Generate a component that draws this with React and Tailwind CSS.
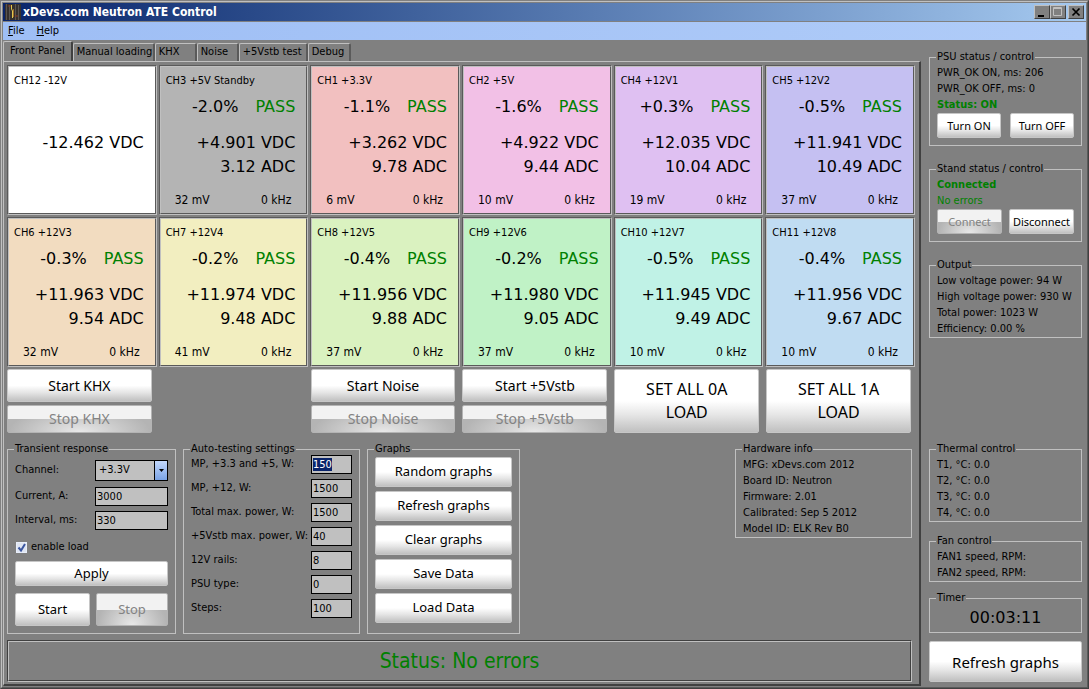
import React, { useEffect, useRef } from "react"

const channels = [
    { name: "CH12 -12V", bg: "bg-white", volts: "-12.462 VDC" },
    { name: "CH3 +5V Standby", bg: "bg-[#b4b4b4]", diff: "-2.0%", volts: "+4.901 VDC", amps: "3.12 ADC", ripple: "32 mV" },
    { name: "CH1 +3.3V", bg: "bg-[#f2c0c0]", diff: "-1.1%", volts: "+3.262 VDC", amps: "9.78 ADC", ripple: "6 mV" },
    { name: "CH2 +5V", bg: "bg-[#f2c0e6]", diff: "-1.6%", volts: "+4.922 VDC", amps: "9.44 ADC", ripple: "10 mV" },
    { name: "CH4 +12V1", bg: "bg-[#dfc0f2]", diff: "+0.3%", volts: "+12.035 VDC", amps: "10.04 ADC", ripple: "19 mV" },
    { name: "CH5 +12V2", bg: "bg-[#c5c0f2]", diff: "-0.5%", volts: "+11.941 VDC", amps: "10.49 ADC", ripple: "37 mV" },
    { name: "CH6 +12V3", bg: "bg-[#f2dcc0]", diff: "-0.3%", volts: "+11.963 VDC", amps: "9.54 ADC", ripple: "32 mV" },
    { name: "CH7 +12V4", bg: "bg-[#f2eec0]", diff: "-0.2%", volts: "+11.974 VDC", amps: "9.48 ADC", ripple: "41 mV" },
    { name: "CH8 +12V5", bg: "bg-[#daf2c0]", diff: "-0.4%", volts: "+11.956 VDC", amps: "9.88 ADC", ripple: "37 mV" },
    { name: "CH9 +12V6", bg: "bg-[#c0f2c6]", diff: "-0.2%", volts: "+11.980 VDC", amps: "9.05 ADC", ripple: "37 mV" },
    { name: "CH10 +12V7", bg: "bg-[#c0f2e6]", diff: "-0.5%", volts: "+11.945 VDC", amps: "9.49 ADC", ripple: "10 mV" },
    { name: "CH11 +12V8", bg: "bg-[#c0dcf2]", diff: "-0.4%", volts: "+11.956 VDC", amps: "9.67 ADC", ripple: "10 mV" },
];

const tabs = [
    { name: "Manual loading", width: "w-[82px]" },
    { name: "KHX", width: "w-[42px]" },
    { name: "Noise", width: "w-[42px]" },
    { name: "+5Vstb test", width: "w-[69px]" },
    { name: "Debug", width: "w-[43px]" },
];

const testSettings = [
    { label: "MP, +3.3 and +5, W:", value: "150" },
    { label: "MP, +12, W:", value: "1500" },
    { label: "Total max. power, W:", value: "1500" },
    { label: "+5Vstb max. power, W:", value: "40" },
    { label: "12V rails:", value: "8" },
    { label: "PSU type:", value: "0" },
    { label: "Steps:", value: "100" },
];

const graphActions = ["Random graphs", "Refresh graphs", "Clear graphs", "Save Data", "Load Data"];

function Channel({ channel }) {
    const { name, bg, diff, volts, amps, ripple } = channel;

    return (
        <section className="border border-[#c0c0c0] border-t-[#5a5a5a] border-l-[#5a5a5a]">
            <div className={`h-[148px] border border-[#5a5a5a] border-t-[#c0c0c0] border-l-[#c0c0c0] pt-[5px] ${bg}`}>
                <h2 className="pl-[5px] leading-[18px]">{name}</h2>
                <div className="pr-[11px] font-['DejaVu_Sans'] text-base leading-6 text-right">
                    <p className="flex h-[41px] items-start justify-end gap-[17px] pt-[5px]">
                        <span>{diff}</span>
                        {diff && <span className="text-[#008000]">PASS</span>}
                    </p>
                    <p>{volts}</p>
                    <p className="h-6">{amps}</p>
                </div>
                {ripple && (
                    <p className="flex justify-between pt-[13px] pr-[15px] pl-[14px] text-xs">
                        <span>{ripple}</span>
                        <span>0 kHz</span>
                    </p>
                )}
            </div>
        </section>
    );
}

function Group({ title, className = "", children }) {
    return (
        <fieldset className={`min-w-0 border border-[#c0c0c0] px-[7px] pt-px ${className}`}>
            <legend className="-ml-px px-px leading-[14px]">{title}</legend>
            {children}
        </fieldset>
    );
}

function Button({ className = "", disabled, children }) {
    const look = disabled
        ? "border-[#b4b4b4] text-[#838383] bg-[linear-gradient(#f2f2f2_50%,transparent_50%),radial-gradient(ellipse_at_bottom,#e8e8e8,#b4b4b4_70%)]"
        : "border-[#c6c6c6] text-black bg-[linear-gradient(#fff_50%,#e6e6e6_72%,#c0c0c0)]";

    return (
        <button type="button" disabled={disabled} className={`rounded-[2px] border font-['Noto_Sans'] ${look} ${className}`}>
            {children}
        </button>
    );
}

function Field({ label, value, inputClass, selected }) {
    const inputRef = useRef(null);

    useEffect(() => {
        if (selected) {
            inputRef.current?.focus();
            inputRef.current?.select();
        }
    }, [selected]);

    return (
        <label className="flex h-6 items-center justify-between whitespace-nowrap">
            {label}
            <input
                ref={inputRef}
                type="text"
                defaultValue={value}
                className={`h-[19px] border border-black bg-[#c0c0c0] pl-px outline-none selection:bg-[#0a246a] selection:text-white ${inputClass}`}
            />
        </label>
    );
}

function TitleBar() {
    const control = "flex h-[14px] w-4 items-center justify-center border border-[#404040] border-t-[#c0c0c0] border-l-[#c0c0c0] bg-[#808080]";

    return (
        <header className="flex h-[18px] items-center bg-linear-to-r from-[#0a246a] to-[#a6caf0] pr-0.5 pl-0.5">
            <svg width="16" height="16" viewBox="0 0 16 16" aria-hidden="true">
                <rect width="16" height="16" fill="#35302e" />
                <path d="M1.500 0v16M4.500 1v15M10.500 0v16M13.500 1v15" stroke="#5a5552" />
                <path d="M3 2h3M10 12h3" stroke="#8a3a22" />
                <path d="M6.500 1v4l1 2v7" stroke="#e0c850" fill="none" />
                <path d="M8.500 5v8" stroke="#9a6a2a" />
            </svg>
            <h1 className="pl-0.5 text-xs font-bold text-white">xDevs.com Neutron ATE Control</h1>
            <div className="ml-auto flex">
                <button aria-label="Minimize" className={control}>
                    <svg width="12" height="12" viewBox="0 0 12 12"><path d="M2 9h6v2H2z" /></svg>
                </button>
                <button aria-label="Maximize" className={control}>
                    <svg width="12" height="12" viewBox="0 0 12 12" fill="none" stroke="#c0c0c0"><path d="M1.500 1.500h8v8h-8zM1 2.500h9" /></svg>
                </button>
                <button aria-label="Close" className={`ml-0.5 ${control}`}>
                    <svg width="12" height="12" viewBox="0 0 12 12" stroke="#000" strokeWidth="1.700"><path d="M2.500 2.500l7 7M9.500 2.500l-7 7" /></svg>
                </button>
            </div>
        </header>
    );
}

function Tabs() {
    return (
        <div role="tablist" className="flex h-5 items-end">
            <button role="tab" aria-selected="true" className="h-full rounded-t-[2px] border-t border-r-2 border-l border-t-[#c0c0c0] border-r-[#404040] border-l-[#c0c0c0] px-1.5">
                Front Panel
            </button>
            {tabs.map((tab) => (
                <button key={tab.name} role="tab" aria-selected="false" className={`h-[18px] rounded-t-[2px] border-t border-r-2 border-l border-t-[#c0c0c0] border-r-[#5a5a5a] border-l-[#c0c0c0] pl-[3px] text-left whitespace-nowrap ${tab.width}`}>
                    {tab.name}
                </button>
            ))}
        </div>
    );
}

function LoadControls() {
    return (
        <div className="grid grid-cols-6 gap-x-[3px] pt-0.5">
            {["KHX", null, "Noise", "+5Vstb"].map((test, i) => (
                <div key={i} className="flex flex-col gap-[3px] pr-1">
                    {test && (
                        <>
                            <Button className="h-[33px] text-sm">Start {test}</Button>
                            <Button disabled className="h-7 text-sm">Stop {test}</Button>
                        </>
                    )}
                </div>
            ))}
            {["0A", "1A"].map((load) => (
                <div key={load} className="flex pr-1">
                    <Button className="w-full px-5 text-base leading-[23px]">SET ALL {load} LOAD</Button>
                </div>
            ))}
        </div>
    );
}

function TransientResponse() {
    return (
        <Group title="Transient response" className="w-[169px]">
            <label className="flex h-[27px] items-center justify-between">
                Channel:
                <span className="relative">
                    <select className="block h-[21px] w-[73px] appearance-none border border-black bg-[#c0c0c0] pl-[3px]">
                        <option>+3.3V</option>
                    </select>
                    <span className="pointer-events-none absolute top-0 right-0 flex h-[21px] w-[14px] items-center justify-center border border-black bg-linear-to-b from-[#c3d8fb] to-[#7aa3e6]">
                        <svg width="5" height="3" viewBox="0 0 5 3" aria-hidden="true"><path d="M0 0h5L2.500 3z" /></svg>
                    </span>
                </span>
            </label>
            <Field label="Current, A:" value="3000" inputClass="w-[73px]" />
            <Field label="Interval, ms:" value="330" inputClass="w-[73px]" />
            <label className="flex h-[29px] items-center gap-1 pt-0.5 pl-px">
                <span className="relative">
                    <input type="checkbox" defaultChecked className="peer block size-[11px] appearance-none border border-[#e8eefa] bg-[#dfe5f2]" />
                    <svg className="pointer-events-none absolute top-0 left-0 hidden peer-checked:block" width="11" height="11" viewBox="0 0 11 11" fill="none" stroke="#3a56a0" strokeWidth="2" aria-hidden="true">
                        <path d="M2.500 5.500l2.500 3L9 2" />
                    </svg>
                </span>
                enable load
            </label>
            <div className="flex flex-wrap justify-between gap-y-[7px]">
                <Button className="h-[25px] w-full text-[13px]">Apply</Button>
                <Button className="h-[33px] w-[75px] text-[13px]">Start</Button>
                <Button disabled className="h-[33px] w-[72px] text-[13px]">Stop</Button>
            </div>
        </Group>
    );
}

function FrontPanel() {
    return (
        <main className="flex flex-1 flex-col border-t border-r-2 border-b-2 border-l border-t-[#c0c0c0] border-r-[#404040] border-b-[#404040] border-l-[#c0c0c0] pt-[3px] pr-1 pb-0.5 pl-[3px]">
            <div className="grid grid-cols-6 gap-0.5">
                {channels.map((channel) => (
                    <Channel key={channel.name} channel={channel} />
                ))}
            </div>
            <LoadControls />
            <div className="flex items-start gap-[7px] pt-[9px] pr-[3px]">
                <div className="flex gap-[7px]">
                    <TransientResponse />
                    <Group title="Auto-testing settings" className="w-[177px] pb-[13px]">
                        <div className="-mt-[5px]">
                            {testSettings.map((setting, i) => (
                                <Field key={setting.label} label={setting.label} value={setting.value} selected={i === 0} inputClass="w-[41px]" />
                            ))}
                        </div>
                    </Group>
                    <Group title="Graphs" className="w-[153px]">
                        <div className="flex flex-col gap-1">
                            {graphActions.map((action) => (
                                <Button key={action} className="h-[30px] text-[13px]">{action}</Button>
                            ))}
                        </div>
                    </Group>
                </div>
                <Group title="Hardware info" className="ml-auto w-[177px] leading-4">
                    <p>MFG: xDevs.com 2012</p>
                    <p>Board ID: Neutron</p>
                    <p>Firmware: 2.01</p>
                    <p>Calibrated: Sep 5 2012</p>
                    <p>Model ID: ELK Rev B0</p>
                </Group>
            </div>
            <footer className="mt-auto mr-[3px] border border-[#c0c0c0] border-t-[#404040] border-l-[#404040]">
                <p className="border border-[#404040] border-t-[#c0c0c0] border-l-[#c0c0c0] text-center text-[21px] leading-[38px] text-[#008000]">Status: No errors</p>
            </footer>
        </main>
    );
}

function SidePanel() {
    return (
        <aside className="flex w-[153px] flex-col leading-4">
            <Group title="PSU status / control" className="pb-[7px]">
                <p>PWR_OK ON, ms: 206</p>
                <p>PWR_OK OFF, ms: 0</p>
                <p className="font-bold text-[#008000]">Status: ON</p>
                <div className="flex gap-[9px]">
                    <Button className="h-[25px] w-[65px]">Turn ON</Button>
                    <Button className="h-[25px] w-[65px]">Turn OFF</Button>
                </div>
            </Group>
            <Group title="Stand status / control" className="mt-4 pb-[7px]">
                <p className="font-bold text-[#008000]">Connected</p>
                <p className="text-[#008000]">No errors</p>
                <div className="flex gap-[7px]">
                    <Button disabled className="h-[25px] w-[65px]">Connect</Button>
                    <Button className="h-[25px] w-[65px]">Disconnect</Button>
                </div>
            </Group>
            <Group title="Output" className="mt-4">
                <p>Low voltage power: 94 W</p>
                <p>High voltage power: 930 W</p>
                <p>Total power: 1023 W</p>
                <p>Efficiency: 0.00 %</p>
            </Group>
            <Group title="Thermal control" className="mt-auto">
                <p>T1, °C: 0.0</p>
                <p>T2, °C: 0.0</p>
                <p>T3, °C: 0.0</p>
                <p>T4, °C: 0.0</p>
            </Group>
            <Group title="Fan control" className="mt-3">
                <p>FAN1 speed, RPM:</p>
                <p>FAN2 speed, RPM:</p>
            </Group>
            <Group title="Timer" className="mt-[9px]">
                <p className="h-[26px] text-center font-['DejaVu_Sans'] text-base leading-6">00:03:11</p>
            </Group>
            <Button className="mt-2 h-[41px] text-[15px]">Refresh graphs</Button>
        </aside>
    );
}

export default function App() {
    return (
        <div className="flex min-h-screen flex-col border border-[#404040] border-t-[#808080] border-l-[#808080] font-['DejaVu_Sans_Condensed',sans-serif] text-[11px] text-black">
            <div className="flex flex-1 flex-col border border-[#5a5a5a] border-t-[#c0c0c0] border-l-[#c0c0c0] bg-[#808080] p-px">
                <TitleBar />
                <nav className="mt-px flex h-[18px] items-center gap-3 bg-linear-to-r from-[#9ebef5] to-[#b0ccf8] pl-[5px]">
                    <button><u>F</u>ile</button>
                    <button><u>H</u>elp</button>
                </nav>
                <div className="flex flex-1 pt-px pr-1">
                    <div className="flex flex-1 flex-col">
                        <Tabs />
                        <FrontPanel />
                    </div>
                    <div className="flex pt-[9px] pb-1 pl-2">
                        <SidePanel />
                    </div>
                </div>
            </div>
        </div>
    );
}
